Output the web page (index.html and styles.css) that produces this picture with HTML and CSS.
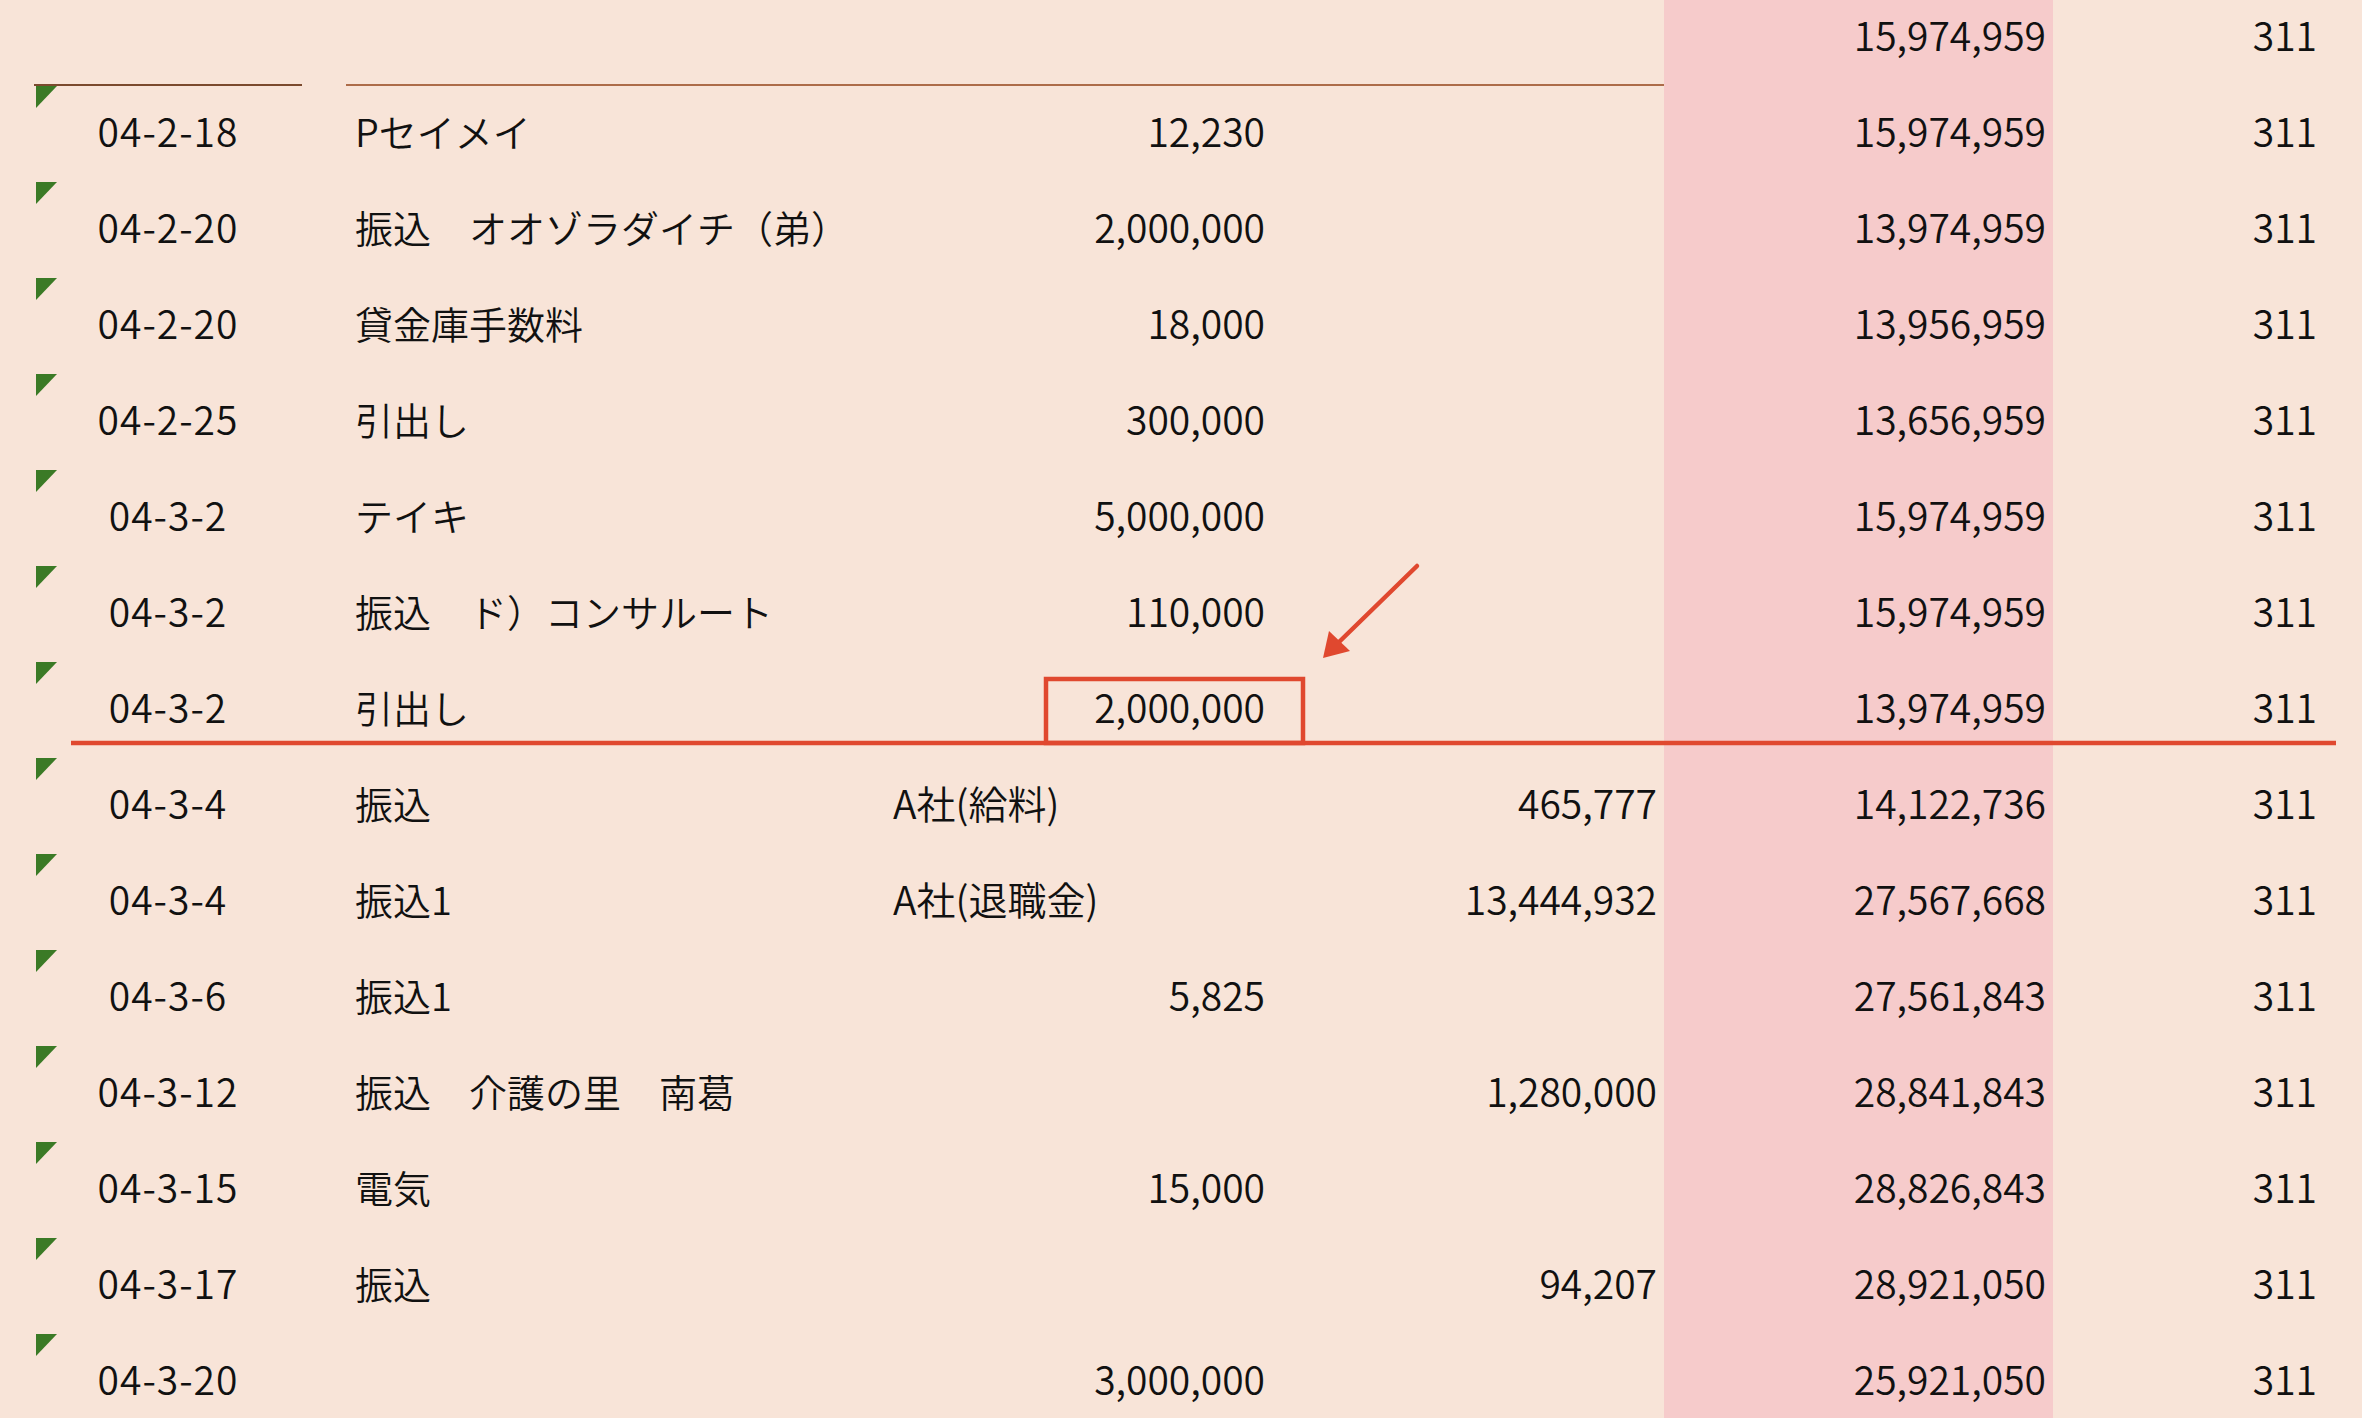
FILE: index.html
```html
<!DOCTYPE html>
<html lang="ja">
<head>
    <meta charset="UTF-8">
    <meta name="viewport" content="width=device-width, initial-scale=1.0">
    <title>預金出納帳</title>
    <link rel="stylesheet" href="styles.css">
</head>
<body>
    <div class="sheet">
        <table class="ledger">
            <colgroup>
                <col class="col-a">
                <col class="col-date">
                <col class="col-c">
                <col class="col-desc">
                <col class="col-memo">
                <col class="col-out">
                <col class="col-in">
                <col class="col-bal">
                <col class="col-code">
                <col class="col-rest">
            </colgroup>
            <tbody>
                <tr class="top-row">
                    <td></td>
                    <td class="ruled-dark"></td>
                    <td></td>
                    <td class="ruled"></td>
                    <td class="ruled"></td>
                    <td class="ruled"></td>
                    <td class="ruled"></td>
                    <td class="num bal">15,974,959</td>
                    <td class="num">311</td>
                    <td></td>
                </tr>
                <tr>
                    <td></td><td class="date">04-2-18</td><td></td>
                    <td class="text desc">Pセイメイ</td><td class="text"></td>
                    <td class="num">12,230</td><td class="num"></td>
                    <td class="num bal">15,974,959</td><td class="num">311</td><td></td>
                </tr>
                <tr>
                    <td></td><td class="date">04-2-20</td><td></td>
                    <td class="text desc">振込　オオゾラダイチ（弟）</td><td class="text"></td>
                    <td class="num">2,000,000</td><td class="num"></td>
                    <td class="num bal">13,974,959</td><td class="num">311</td><td></td>
                </tr>
                <tr>
                    <td></td><td class="date">04-2-20</td><td></td>
                    <td class="text desc">貸金庫手数料</td><td class="text"></td>
                    <td class="num">18,000</td><td class="num"></td>
                    <td class="num bal">13,956,959</td><td class="num">311</td><td></td>
                </tr>
                <tr>
                    <td></td><td class="date">04-2-25</td><td></td>
                    <td class="text desc">引出し</td><td class="text"></td>
                    <td class="num">300,000</td><td class="num"></td>
                    <td class="num bal">13,656,959</td><td class="num">311</td><td></td>
                </tr>
                <tr>
                    <td></td><td class="date">04-3-2</td><td></td>
                    <td class="text desc">テイキ</td><td class="text"></td>
                    <td class="num">5,000,000</td><td class="num"></td>
                    <td class="num bal">15,974,959</td><td class="num">311</td><td></td>
                </tr>
                <tr>
                    <td></td><td class="date">04-3-2</td><td></td>
                    <td class="text desc">振込　ド）コンサルート</td><td class="text"></td>
                    <td class="num">110,000</td><td class="num"></td>
                    <td class="num bal">15,974,959</td><td class="num">311</td><td></td>
                </tr>
                <tr>
                    <td></td><td class="date">04-3-2</td><td></td>
                    <td class="text desc">引出し</td><td class="text"></td>
                    <td class="num">2,000,000</td><td class="num"></td>
                    <td class="num bal">13,974,959</td><td class="num">311</td><td></td>
                </tr>
                <tr>
                    <td></td><td class="date">04-3-4</td><td></td>
                    <td class="text desc">振込</td><td class="text">A社(給料)</td>
                    <td class="num"></td><td class="num">465,777</td>
                    <td class="num bal">14,122,736</td><td class="num">311</td><td></td>
                </tr>
                <tr>
                    <td></td><td class="date">04-3-4</td><td></td>
                    <td class="text desc">振込1</td><td class="text">A社(退職金)</td>
                    <td class="num"></td><td class="num">13,444,932</td>
                    <td class="num bal">27,567,668</td><td class="num">311</td><td></td>
                </tr>
                <tr>
                    <td></td><td class="date">04-3-6</td><td></td>
                    <td class="text desc">振込1</td><td class="text"></td>
                    <td class="num">5,825</td><td class="num"></td>
                    <td class="num bal">27,561,843</td><td class="num">311</td><td></td>
                </tr>
                <tr>
                    <td></td><td class="date">04-3-12</td><td></td>
                    <td class="text desc">振込　介護の里　南葛</td><td class="text"></td>
                    <td class="num"></td><td class="num">1,280,000</td>
                    <td class="num bal">28,841,843</td><td class="num">311</td><td></td>
                </tr>
                <tr>
                    <td></td><td class="date">04-3-15</td><td></td>
                    <td class="text desc">電気</td><td class="text"></td>
                    <td class="num">15,000</td><td class="num"></td>
                    <td class="num bal">28,826,843</td><td class="num">311</td><td></td>
                </tr>
                <tr>
                    <td></td><td class="date">04-3-17</td><td></td>
                    <td class="text desc">振込</td><td class="text"></td>
                    <td class="num"></td><td class="num">94,207</td>
                    <td class="num bal">28,921,050</td><td class="num">311</td><td></td>
                </tr>
                <tr>
                    <td></td><td class="date">04-3-20</td><td></td>
                    <td class="text desc"></td><td class="text"></td>
                    <td class="num">3,000,000</td><td class="num"></td>
                    <td class="num bal">25,921,050</td><td class="num">311</td><td></td>
                </tr>
            </tbody>
        </table>
    </div>

    <!-- red markup drawn over the sheet -->
    <svg class="markup" width="2362" height="1418" viewBox="0 0 2362 1418">
        <line x1="71" y1="743" x2="2336" y2="743" stroke="#e0482f" stroke-width="4.5"/>
        <rect x="1046" y="679" width="257" height="64" fill="none" stroke="#e0482f" stroke-width="4.5"/>
        <line x1="1417" y1="566" x2="1338" y2="643" stroke="#e0482f" stroke-width="4.5" stroke-linecap="round"/>
        <polygon points="1323,658 1329,631 1350,651" fill="#e0482f"/>
    </svg>
</body>
</html>
```

FILE: styles.css
```css
body {
    margin: 0;
    position: relative;
    height: 1418px;
    overflow: hidden;
    background: #f8e4d8;
    font-family: "Noto Sans CJK JP", "Noto Sans", sans-serif;
    font-weight: 350;
    color: #111;
}

.sheet {
    margin-top: -10px;
}

.ledger {
    width: 2362px;
    table-layout: fixed;
    border-collapse: separate;
    border-spacing: 0;
    font-size: 39px;
}

.col-a { width: 34px; }
.col-date { width: 268px; }
.col-c { width: 44px; }
.col-desc { width: 538px; }
.col-memo { width: 156px; }
.col-out { width: 232px; }
.col-in { width: 392px; }
.col-bal { width: 389px; }
.col-code { width: 271px; }
.col-rest { width: 38px; }

.ledger tr {
    height: 96px;
}

.ledger td {
    padding: 0 0 8px;
    vertical-align: middle;
    white-space: nowrap;
    overflow: visible;
}

.ruled {
    box-shadow: inset 0 -2px 0 #ad6c49;
}

.ruled-dark {
    box-shadow: inset 0 -2px 0 #7b4a2e;
}

.date {
    position: relative;
    text-align: center;
    letter-spacing: 1px;
}

/* green error marker in the corner of each date cell */
.date::before {
    content: "";
    position: absolute;
    top: 0;
    left: 2px;
    width: 21px;
    height: 22px;
    background: #3b7a26;
    clip-path: polygon(0 0, 100% 0, 0 100%);
}

.text {
    padding-left: 9px !important;
    text-align: left;
}

.desc {
    font-size: 38px;
}

.num {
    padding-right: 7px !important;
    text-align: right;
}

.bal {
    background: #f6cbcb;
}

.markup {
    position: absolute;
    top: 0;
    left: 0;
    pointer-events: none;
}
```
